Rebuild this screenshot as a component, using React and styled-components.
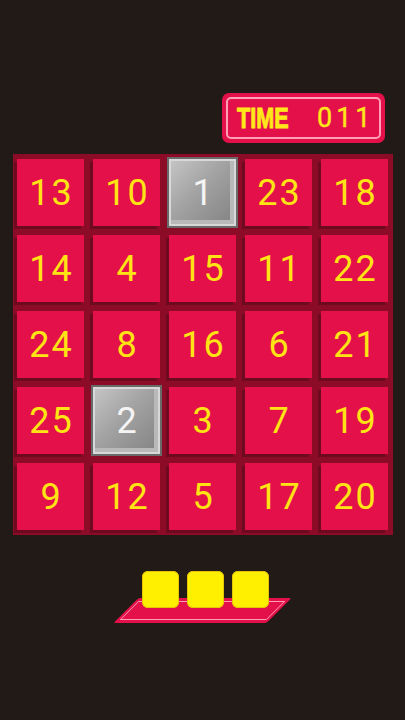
import React from "react";
import styled, { createGlobalStyle } from "styled-components";

const Global = createGlobalStyle`
  html, body { margin: 0; padding: 0; background: #221a16; }
  body { font-family: "Liberation Sans", Arial, sans-serif; }
`;

const Page = styled.div`
  width: 405px;
  height: 720px;
  background: #221a16;
  display: flex;
  flex-direction: column;
  align-items: center;
  padding-top: 93px;
  box-sizing: border-box;
`;

const TimerRow = styled.div`
  width: 100%;
  display: flex;
  justify-content: flex-end;
  padding-right: 20px;
  box-sizing: border-box;
`;

const Timer = styled.div`
  width: 163px;
  height: 50px;
  background: #e3104a;
  border-radius: 7px;
  padding: 4px;
  box-sizing: border-box;
`;

const TimerInner = styled.div`
  height: 100%;
  border: 2px solid #ff9fb6;
  border-radius: 5px;
  box-sizing: border-box;
  display: flex;
  align-items: center;
  padding-left: 9px;
  gap: 26px;
  color: #ffe81a;
`;

const TimeLabel = styled.span`
  font-family: "Liberation Sans", Arial, sans-serif;
  font-weight: 700;
  font-size: 30px;
  display: inline-block;
  transform: scaleX(0.72);
  transform-origin: left center;
  width: 54px;
  white-space: nowrap;
  -webkit-text-stroke: 1px #ffe81a;
`;

const TimeValue = styled.span`
  font-family: Roboto, "Open Sans", sans-serif;
  font-weight: 400;
  font-size: 27px;
  letter-spacing: 4px;
  -webkit-text-stroke: 0.4px #ffe81a;
`;

const Board = styled.div`
  margin-top: 11px;
  width: 380px;
  background: #8c0b27;
  padding: 5px;
  box-sizing: border-box;
  display: grid;
  grid-template-columns: repeat(5, 67px);
  grid-auto-rows: 67px;
  gap: 9px;
  justify-content: center;
`;

const Tile = styled.div`
  display: flex;
  align-items: center;
  justify-content: center;
  font-family: Roboto, "Open Sans", sans-serif;
  font-weight: 400;
  font-size: 36px;
  letter-spacing: 2px;
  padding-left: 2px;
  box-sizing: border-box;
  ${(p) =>
    p.$gray
      ? `
    background: linear-gradient(135deg, #c4c4c4 0%, #a2a2a2 45%, #838383 100%);
    color: #f4f4f4;
    border: 2px solid #d8d8d8;
    box-shadow: inset -4px -4px 0 #b9b9b9, 0 0 0 2px #6a6a6a;
  `
      : `
    background: #e3104a;
    color: #ffe414;
    box-shadow: -3px 3px 0 #6e0a1f;
  `}
`;

const Tray = styled.div`
  margin-top: 36px;
  position: relative;
  width: 181px;
  height: 52px;
`;

const Platform = styled.div`
  position: absolute;
  left: 14px;
  bottom: 0;
  width: 153px;
  height: 25px;
  background: #e3104a;
  transform: skewX(-45deg);
  border-radius: 2px;
  padding: 3px;
  box-sizing: border-box;
`;

const PlatformLine = styled.div`
  width: 100%;
  height: 100%;
  border: 1.5px solid #ff9fb6;
  box-sizing: border-box;
  border-radius: 1px;
`;

const Blocks = styled.div`
  position: absolute;
  left: 30px;
  top: 0;
  display: flex;
  gap: 8px;
`;

const Block = styled.div`
  width: 37px;
  height: 37px;
  background: #fff000;
  border-radius: 6px;
  box-shadow: inset 0 0 0 1px #e8c400;
`;

const rows = [
  [13, 10, 1, 23, 18],
  [14, 4, 15, 11, 22],
  [24, 8, 16, 6, 21],
  [25, 2, 3, 7, 19],
  [9, 12, 5, 17, 20],
];

export default function App() {
  return (
    <>
      <Global />
      <Page>
        <TimerRow>
          <Timer>
            <TimerInner>
              <TimeLabel>TIME</TimeLabel>
              <TimeValue>011</TimeValue>
            </TimerInner>
          </Timer>
        </TimerRow>
        <Board>
          {rows.flat().map((n) => (
            <Tile key={n} $gray={n === 1 || n === 2}>
              {n}
            </Tile>
          ))}
        </Board>
        <Tray>
          <Platform>
            <PlatformLine />
          </Platform>
          <Blocks>
            <Block />
            <Block />
            <Block />
          </Blocks>
        </Tray>
      </Page>
    </>
  );
}
